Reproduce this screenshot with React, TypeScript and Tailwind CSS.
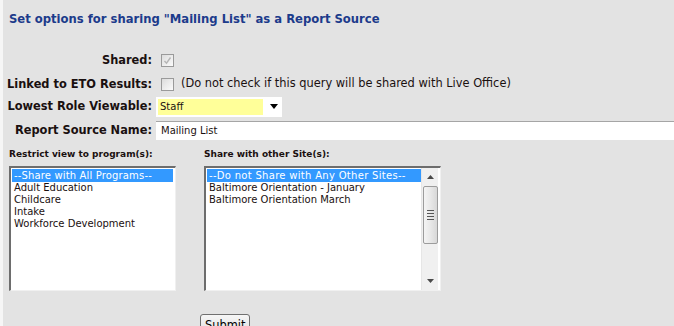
import React from "react";

const font = { fontFamily: '"DejaVu Sans", Verdana, sans-serif' };

function Check({ disabled, checked }: { disabled?: boolean; checked?: boolean }) {
  return (
    <div className="ml-[5px] w-[13px] h-[13px] border border-[#9a9a9a] bg-gradient-to-br from-[#dcdcdc] to-[#fbfbfb] flex items-center justify-center">
      {checked && (
        <svg width="9" height="9" viewBox="0 0 9 9">
          <path d="M1.5 5 L3.5 7.2 L7.5 1.5" fill="none" stroke={disabled ? "#b5b5b5" : "#333"} strokeWidth="1.4" />
        </svg>
      )}
    </div>
  );
}

export default function App() {
  return (
    <div
      className="w-[674px] h-[326px] overflow-hidden bg-[#e3e3e3] border-l-[3px] border-[#f6f6f6] text-[#1a1010]"
      style={font}
    >
      <div className="pt-[11px] pl-[6px] h-[48px] text-[11.6px] font-bold text-[#1c3b8b] leading-[16px] whitespace-nowrap">
        Set options for sharing "Mailing List" as a Report Source
      </div>

      <div className="grid grid-cols-[149px_1fr] items-center text-[11.4px]">
        <div className="text-right font-bold h-[24px] leading-[24px] whitespace-nowrap">Shared:</div>
        <div className="pl-[4px] h-[24px] flex items-center">
          <Check disabled checked />
        </div>

        <div className="text-right font-bold h-[24px] leading-[24px] whitespace-nowrap">Linked to ETO Results:</div>
        <div className="pl-[4px] h-[24px] flex items-center">
          <Check />
          <span className="ml-[7px] whitespace-nowrap">(Do not check if this query will be shared with Live Office)</span>
        </div>

        <div className="text-right font-bold h-[21px] leading-[21px] whitespace-nowrap">Lowest Role Viewable:</div>
        <div className="pl-[4px] h-[21px] flex items-center">
          <div className="w-[126px] h-[20px] bg-white flex items-center pl-[2px] pr-[4px]">
            <div className="w-[105px] h-[16px] bg-[#ffff99] text-[10px] leading-[16px] pl-[2px]">Staff</div>
            <div className="flex-1 flex justify-end">
              <svg width="8" height="5" viewBox="0 0 8 5">
                <path d="M0 0 H8 L4 5 Z" fill="#000" />
              </svg>
            </div>
          </div>
        </div>

        <div className="text-right font-bold h-[26px] leading-[26px] whitespace-nowrap">Report Source Name:</div>
        <div className="pl-[4px] h-[26px] flex items-center">
          <div className="w-full h-[19px] bg-white border-t border-[#a5a5a5] text-[10px] leading-[17px] pl-[5px]">
            Mailing List
          </div>
        </div>
      </div>

      <div className="flex pl-[6px] pt-[5px]">
        <div className="w-[195px]">
          <div className="text-[9px] font-bold leading-[13px] h-[18px] whitespace-nowrap">Restrict view to program(s):</div>
          <div className="w-[167px] h-[125px] bg-white border-t-2 border-l-2 border-[#6d6d6d] border-r border-b border-r-[#f0f0f0] border-b-[#f0f0f0] pt-[1px] pl-[1px] text-[10px] leading-[12px]">
            <div className="bg-[#3399ff] text-white pl-[2px] w-[161px] h-[13px] leading-[13px] tracking-[0.15px]">--Share with All Programs--</div>
            <div className="pl-[2px]">Adult Education</div>
            <div className="pl-[2px]">Childcare</div>
            <div className="pl-[2px]">Intake</div>
            <div className="pl-[2px]">Workforce Development</div>
          </div>
        </div>
        <div>
          <div className="text-[9px] font-bold leading-[13px] h-[18px] whitespace-nowrap">Share with other Site(s):</div>
          <div className="w-[237px] h-[125px] bg-white border-t-2 border-l-2 border-[#6d6d6d] border-r border-b border-r-[#f0f0f0] border-b-[#f0f0f0] flex text-[10px] leading-[12px]">
            <div className="flex-1 pt-[1px] pl-[1px]">
              <div className="bg-[#3399ff] text-white pl-[2px] h-[13px] leading-[13px] tracking-[0.3px] whitespace-nowrap">--Do not Share with Any Other Sites--</div>
              <div className="pl-[2px]">Baltimore Orientation - January</div>
              <div className="pl-[2px]">Baltimore Orientation March</div>
            </div>
            <div className="w-[17px] mr-[2px] bg-[#f0f0f0] border-l border-[#e6e6e6] flex flex-col items-center">
              <div className="h-[18px] flex items-center justify-center">
                <svg width="7" height="4" viewBox="0 0 7 4"><path d="M3.5 0 L7 4 H0 Z" fill="#4a4a4a" /></svg>
              </div>
              <div className="w-[15px] h-[58px] rounded-[2px] border border-[#9c9c9c] bg-gradient-to-r from-[#f4f4f4] via-[#e8e8e8] to-[#d8d8d8] flex flex-col items-center justify-center gap-[2px]">
                <div className="w-[7px] h-[1px] bg-[#555]" />
                <div className="w-[7px] h-[1px] bg-[#555]" />
                <div className="w-[7px] h-[1px] bg-[#555]" />
                <div className="w-[7px] h-[1px] bg-[#555]" />
              </div>
              <div className="flex-1" />
              <div className="h-[18px] flex items-center justify-center">
                <svg width="7" height="4" viewBox="0 0 7 4"><path d="M0 0 H7 L3.5 4 Z" fill="#4a4a4a" /></svg>
              </div>
            </div>
          </div>
        </div>
      </div>

      <div className="pl-[197px] pt-[21px]">
        <button className="h-[22px] px-[4px] border border-[#707070] rounded-[3px] bg-gradient-to-b from-[#f6f6f6] to-[#dedede] text-[11.4px] leading-[18px] text-black" style={font}>
          Submit
        </button>
      </div>
    </div>
  );
}
